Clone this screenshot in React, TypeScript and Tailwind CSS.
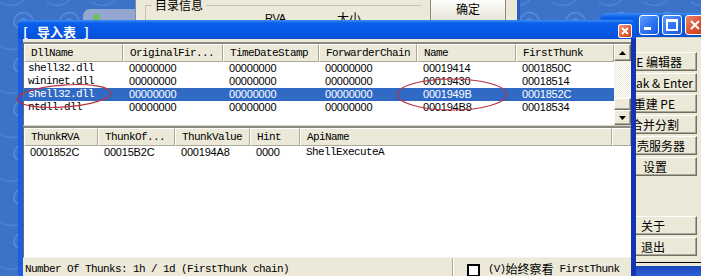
import React from "react";

const MONO = "font-['Liberation_Mono','DejaVu_Sans_Mono',monospace] text-[11px] tracking-[-0.6px]";
const SANS = "font-['Liberation_Sans',Arial,sans-serif] text-[11px] tracking-[-0.2px]";
const CJK = "font-['Noto_Sans_CJK_SC','Noto_Sans',sans-serif]";

const raised =
  "bg-[#ece9d8] border border-t-white border-l-white border-r-[#716f64] border-b-[#716f64] shadow-[inset_-1px_-1px_0_#aca899]";

const headCell =
  "h-full flex items-center shrink-0 bg-[#ece9d8] border-t border-l border-t-white border-l-white border-r border-b border-r-[#aca899] border-b-[#aca899] overflow-hidden whitespace-nowrap";

const upperCols = [
  { w: "w-[99px]", label: "DllName" },
  { w: "w-[100px]", label: "OriginalFir..." },
  { w: "w-[96px]", label: "TimeDateStamp" },
  { w: "w-[98px]", label: "ForwarderChain" },
  { w: "w-[99px]", label: "Name" },
  { w: "w-[98px]", label: "FirstThunk" },
];

const upperRows = [
  ["shell32.dll", "00000000", "00000000", "00000000", "00019414", "0001850C"],
  ["wininet.dll", "00000000", "00000000", "00000000", "00019430", "00018514"],
  ["shell32.dll", "00000000", "00000000", "00000000", "0001949B", "0001852C"],
  ["ntdll.dll", "00000000", "00000000", "00000000", "000194B8", "00018534"],
];

const lowerCols = [
  { w: "w-[74px]", label: "ThunkRVA" },
  { w: "w-[77px]", label: "ThunkOf..." },
  { w: "w-[75px]", label: "ThunkValue" },
  { w: "w-[50px]", label: "Hint" },
  { w: "w-[312px]", label: "ApiName" },
];

const lowerRow = ["0001852C", "00015B2C", "000194A8", "0000", "ShellExecuteA"];

function Swirls() {
  return (
    <svg className="absolute left-0 top-0" width="701" height="276">
      <defs>
        <pattern id="sw" width="46" height="44" patternUnits="userSpaceOnUse">
          <path
            d="M20 22 a3 3 0 1 1 6 0 a6 6 0 1 1 -12 0 a9.5 9.5 0 1 1 19 0 a13 13 0 0 1 -8 12"
            fill="none"
            stroke="#5f95e0"
            strokeWidth="1.6"
            opacity="0.75"
          />
          <path d="M0 2 q12 8 24 -2" fill="none" stroke="#5f95e0" strokeWidth="1.4" opacity="0.5" />
        </pattern>
      </defs>
      <rect width="701" height="276" fill="url(#sw)" />
    </svg>
  );
}

function Arrow({ up }: { up?: boolean }) {
  return (
    <svg width="7" height="4" viewBox="0 0 7 4">
      {up ? <polygon points="3.5,0 7,4 0,4" fill="#000" /> : <polygon points="0,0 7,0 3.5,4" fill="#000" />}
    </svg>
  );
}

function BackWindow() {
  return (
    <div className="absolute left-[135px] top-0 w-[385px] h-[24px] bg-[#ece9d8] border-l border-l-[#7d8fb8] border-r-[3px] border-r-[#2c5cc5] flex items-start pt-[5px]">
      <div className="relative ml-[9px] w-[276px] h-[30px] border-l border-t border-[#c5c2b2] shrink-0">
        <span className={`absolute left-[6px] top-[-9px] px-[3px] bg-[#ece9d8] text-[12px] leading-[16px] text-black ${CJK}`}>
          目录信息
        </span>
        <div className="flex pt-[4px] pl-[119px] items-center">
          <span className={`text-[11px] text-black ${SANS}`}>RVA</span>
          <span className={`ml-[51px] text-[12px] leading-[14px] text-black ${CJK}`}>大小</span>
        </div>
      </div>
      <div className="ml-[9px] mt-[-8px] w-[76px] h-[26px] rounded-[3px] border border-[#8a8a80] bg-[linear-gradient(to_bottom,#ffffff,#f0efe6_60%,#e3e1d3)] flex justify-center pt-[4px] shrink-0">
        <span className={`text-[12px] leading-[14px] text-black ${CJK}`}>确定</span>
      </div>
    </div>
  );
}

function SideButton({ label, pr, mt }: { label: string; pr: string; mt?: string }) {
  return (
    <div className={`${raised} h-[19px] w-[97px] flex items-center justify-end overflow-hidden whitespace-nowrap ${pr} ${mt ?? ""}`}>
      {label}
    </div>
  );
}

function MainWindow() {
  return (
    <div className="absolute left-[600px] top-[13px] w-[110px] h-[263px] flex flex-col">
      <div className="h-[24px] rounded-tl-[7px] bg-[linear-gradient(to_bottom,#3d8ef8_0%,#0a5fe8_18%,#0558e6_60%,#0a4fd4_100%)] flex items-center pl-[39px] gap-[3px]">
        <div className="w-[20px] h-[20px] rounded-[3px] border border-white bg-[linear-gradient(135deg,#5d9bff,#2b6ef0_60%,#1d5ae0)] relative">
          <div className="absolute left-[4px] bottom-[4px] w-[7px] h-[3px] bg-white" />
        </div>
        <div className="w-[20px] h-[20px] rounded-[3px] border border-white bg-[linear-gradient(135deg,#5d9bff,#2b6ef0_60%,#1d5ae0)] relative">
          <div className="absolute left-[3px] top-[3px] w-[12px] h-[12px] border-2 border-t-[3px] border-white" />
        </div>
        <div className="w-[20px] h-[20px] rounded-[3px] border border-white bg-[linear-gradient(135deg,#e9866a,#d8502f_60%,#c33e1e)] flex items-center justify-center">
          <svg width="10" height="10" viewBox="0 0 10 10">
            <path d="M1 1 L9 9 M9 1 L1 9" stroke="#fff" strokeWidth="2" />
          </svg>
        </div>
      </div>
      <div className={`h-[225px] bg-[#ece9d8] border-t border-t-[#d8d4c4] flex flex-col gap-[2px] pt-[14px] text-[12px] text-black ${CJK}`}>
        <SideButton label="PE 编辑器" pr="pr-[14px]" />
        <SideButton label="Break & Enter" pr="pr-[3px]" />
        <SideButton label="重建 PE" pr="pr-[21px]" />
        <SideButton label="合并分割" pr="pr-[17px]" />
        <SideButton label="壳服务器" pr="pr-[11px]" />
        <SideButton label="设置" pr="pr-[29px]" />
        <SideButton label="关于" pr="pr-[31px]" mt="mt-[38px]" />
        <SideButton label="退出" pr="pr-[31px]" />
      </div>
      <div className="h-[1px] bg-black" />
      <div className="h-[3px] bg-[#ece9d8]" />
      <div className="flex-1 bg-[linear-gradient(to_bottom,#1c47b8,#2c62d6)]" />
    </div>
  );
}

function ScrollBar() {
  return (
    <div className="w-[17px] shrink-0 flex flex-col">
      <div className={`${raised} h-[17px] flex items-center justify-center`}>
        <Arrow up />
      </div>
      <div className="flex-1 bg-[repeating-conic-gradient(#ece9d8_0_25%,#ffffff_0_50%)] bg-[length:2px_2px]" />
      <div className={`${raised} h-[12px]`} />
      <div className={`${raised} h-[15px] flex items-center justify-center`}>
        <Arrow />
      </div>
    </div>
  );
}

function UpperList() {
  return (
    <div className="border-t-2 border-l border-b border-t-[#8c8a7e] border-l-[#6f6d63] border-b-[#d9d6c8] bg-white">
      <div className="h-[81px] flex">
        <div className="flex-1 flex flex-col">
          <div className="h-[18px] flex">
            {upperCols.map((c, i) => (
              <div key={i} className={`${headCell} ${c.w} pl-[6px] text-black ${MONO}`}>
                {c.label}
              </div>
            ))}
          </div>
          {upperRows.map((r, ri) => {
            const sel = ri === 2;
            return (
              <div key={ri} className={`h-[13px] flex items-center ${sel ? "bg-[#316ac5] text-white" : "text-black"}`}>
                {r.map((v, ci) => (
                  <div
                    key={ci}
                    className={`${upperCols[ci].w} shrink-0 whitespace-nowrap leading-[13px] ${ci === 0 ? `pl-[4px] ${MONO}` : `pl-[6px] ${SANS}`}`}
                  >
                    {v}
                  </div>
                ))}
              </div>
            );
          })}
        </div>
        <ScrollBar />
      </div>
    </div>
  );
}

function LowerList() {
  return (
    <div className="border-t-2 border-l border-b border-t-[#8c8a7e] border-l-[#6f6d63] border-b-[#f4f2ea] bg-white">
      <div className="h-[129px] flex flex-col">
        <div className="h-[18px] flex">
          {lowerCols.map((c, i) => (
            <div key={i} className={`${headCell} ${c.w} pl-[6px] text-black ${MONO}`}>
              {c.label}
            </div>
          ))}
          <div className={`${headCell} flex-1`} />
        </div>
        <div className="h-[13px] flex items-center text-black">
          {lowerRow.map((v, ci) => (
            <div
              key={ci}
              className={`${lowerCols[ci].w} shrink-0 whitespace-nowrap leading-[13px] pl-[6px] ${ci === 4 ? MONO : SANS}`}
            >
              {v}
            </div>
          ))}
        </div>
      </div>
    </div>
  );
}

function StatusBar() {
  return (
    <div className="h-[22px] flex bg-[#ece9d8] text-black">
      <div className={`w-[430px] shrink-0 flex items-center pl-[2px] border-r border-r-[#aca899] ${MONO}`}>
        Number Of Thunks: 1h / 1d (FirstThunk chain)
      </div>
      <div className="flex-1 flex items-center pl-[13px] border-l border-l-white">
        <div className="w-[13px] h-[13px] border-2 border-black bg-white shrink-0 mt-[2px]" />
        <span className={`ml-[8px] text-[10px] ${MONO} tracking-[-0.8px]`}>(V)</span>
        <span className={`text-[12px] ${CJK}`}>始终察看</span>
        <span className={`ml-[6px] ${MONO}`}>FirstThunk</span>
      </div>
    </div>
  );
}

function Dialog() {
  return (
    <div className="absolute left-[18px] top-[20px] w-[618px] h-[262px] flex flex-col rounded-t-[6px] overflow-hidden">
      <div className="h-[19px] shrink-0 bg-[linear-gradient(to_bottom,#3d8ef8_0%,#0a5fe8_16%,#0558e6_60%,#0a4fd4_100%)] flex items-center pl-[5px] pr-[4px]">
        <div className={`flex items-center text-white font-bold text-[13px] leading-[15px] mt-[3px] ${CJK}`}>
          <span>[</span>
          <span className="ml-[9px]">导入表</span>
          <span className="ml-[8px]">]</span>
        </div>
        <div className="ml-auto mt-[3px] w-[14px] h-[14px] rounded-[2px] border border-white bg-[linear-gradient(135deg,#f09a7a,#e0603a_55%,#c9431f)] flex items-center justify-center">
          <svg width="8" height="8" viewBox="0 0 8 8">
            <path d="M1 1 L7 7 M7 1 L1 7" stroke="#fff" strokeWidth="2" />
          </svg>
        </div>
      </div>
      <div className="flex-1 flex border-l-[5px] border-r-[5px] border-l-[#1d5de2] border-r-[#1535b0]">
        <div className="flex-1 flex flex-col bg-[#ece9d8] pt-[3px]">
          <UpperList />
          <LowerList />
          <StatusBar />
        </div>
      </div>
    </div>
  );
}

export default function App() {
  return (
    <div className="relative w-[701px] h-[276px] overflow-hidden bg-[#3a73c8]">
      <Swirls />
      <div className="absolute left-[83px] top-[9px] w-[60px] h-[16px] rounded-tl-[7px] bg-[#93a7d1]">
        <div className="absolute left-[10px] top-[5px] w-[7px] h-[7px] rounded-full bg-[#6cbf5c]" />
      </div>
      <BackWindow />
      <MainWindow />
      <Dialog />
      <svg className="absolute left-0 top-0 pointer-events-none" width="701" height="276">
        <ellipse cx="64" cy="96" rx="47" ry="11" transform="rotate(-4 64 96)" fill="none" stroke="#b8323e" strokeWidth="1.2" />
        <ellipse cx="452" cy="94.5" rx="54.5" ry="15.5" fill="none" stroke="#b8323e" strokeWidth="1.2" />
      </svg>
    </div>
  );
}
